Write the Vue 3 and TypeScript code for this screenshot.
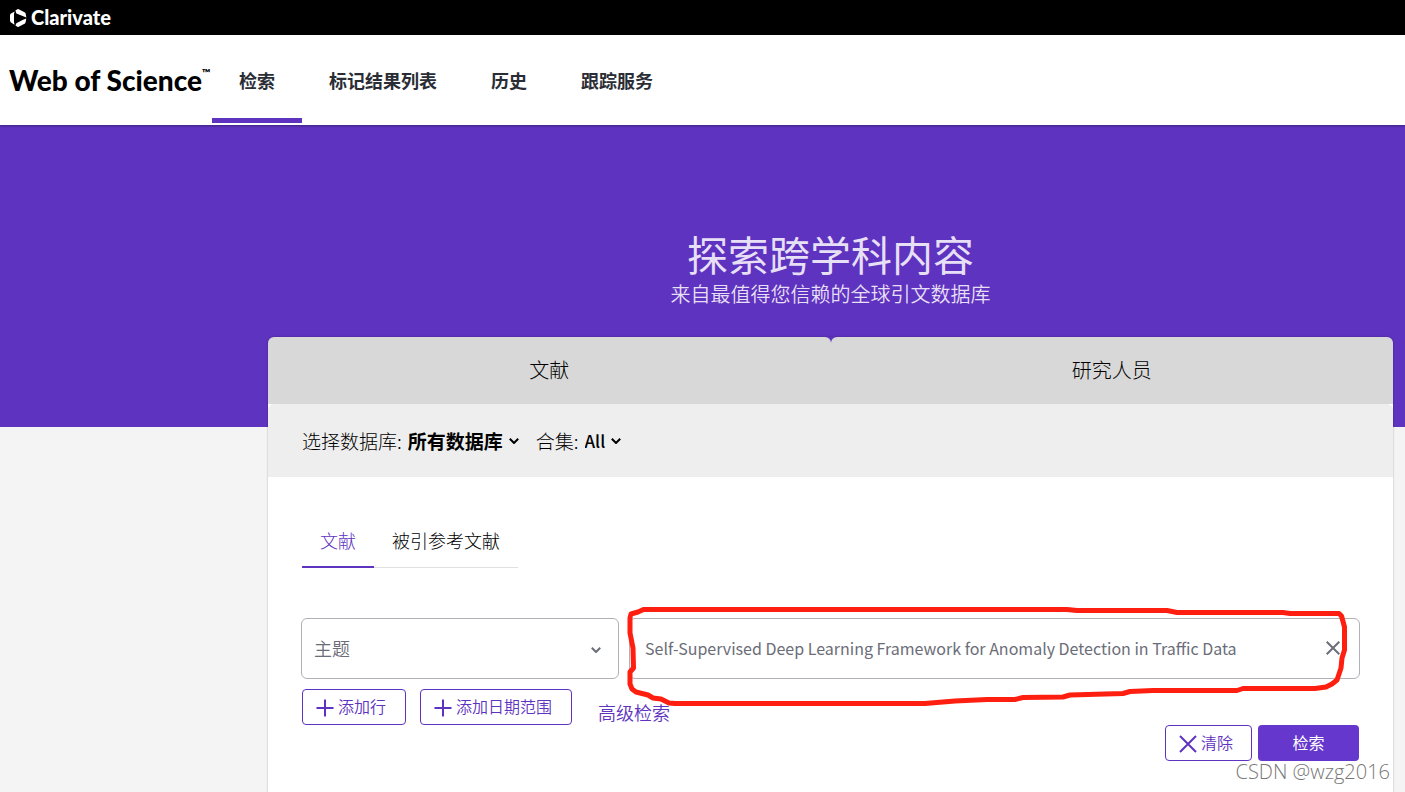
<script setup lang="ts">
import { ref } from 'vue'

const navItems = ['检索', '标记结果列表', '历史', '跟踪服务']
const activeNav = ref(0)

const scopes = ['文献', '研究人员']
const modes = ['文献', '被引参考文献']
const activeMode = ref(0)

const database = ref('所有数据库')
const collection = ref('All')
const field = ref('主题')
const query = ref('Self-Supervised Deep Learning Framework for Anomaly Detection in Traffic Data')

function clearQuery() {
  query.value = ''
}
</script>

<template>
  <div class="page">
    <header>
      <div class="brand-bar">
        <svg class="brand-mark" viewBox="0 0 17 18" aria-hidden="true">
          <path d="M4.6 2.400 1 4.500Q0 5.200 0 6.400V11.600Q0 12.800 1 13.500L4.600 15.800 4 13V5Z" />
          <path d="M5.400 1.500 7.400 0.300Q8.300 -0.100 9.200 0.400L15 3.600Q15.800 4.200 16.300 8.400L6.400 4.600Z" />
          <path d="M16.300 9.600Q15.800 13.800 15 14.400L9.200 17.600Q8.300 18.100 7.400 17.700L5.400 16.500 6.400 14.200 13 10.800Z" />
        </svg>
        <span class="brand-name">Clarivate</span>
      </div>
      <nav class="nav" aria-label="主导航">
        <a class="product" href="#">Web of Science<sup>™</sup></a>
        <a
          v-for="(item, i) in navItems"
          :key="item"
          href="#"
          class="nav-link"
          :class="{ active: activeNav === i }"
          @click.prevent="activeNav = i"
        >{{ item }}</a>
      </nav>
    </header>

    <main>
      <section class="hero">
        <h1>探索跨学科内容</h1>
        <p>来自最值得您信赖的全球引文数据库</p>
      </section>

      <section class="card">
        <div class="scope-tabs">
          <button v-for="scope in scopes" :key="scope" type="button">{{ scope }}</button>
        </div>

        <div class="database-bar">
          <label for="database">选择数据库:</label>
          <span class="inline-select">
            <select id="database" v-model="database">
              <option>所有数据库</option>
            </select>
            <svg viewBox="0 0 10 6" aria-hidden="true"><path d="M0.8 0.8 5 5 9.2 0.8" /></svg>
          </span>
          <label for="collection" class="second">合集:</label>
          <span class="inline-select">
            <select id="collection" v-model="collection">
              <option>All</option>
            </select>
            <svg viewBox="0 0 10 6" aria-hidden="true"><path d="M0.8 0.8 5 5 9.2 0.8" /></svg>
          </span>
        </div>

        <form class="search" @submit.prevent>
          <div class="mode-tabs">
            <button
              v-for="(mode, i) in modes"
              :key="mode"
              type="button"
              :class="{ active: activeMode === i }"
              @click="activeMode = i"
            >{{ mode }}</button>
          </div>

          <div class="fields">
            <div class="field-select">
              <select v-model="field" aria-label="检索字段">
                <option>主题</option>
              </select>
              <svg viewBox="0 0 10 6" aria-hidden="true"><path d="M0.8 0.8 5 5 9.2 0.8" /></svg>
            </div>
            <div class="field-query">
              <input v-model="query" type="text" aria-label="检索内容" />
              <button type="button" aria-label="清空输入" @click="clearQuery">
                <svg viewBox="0 0 14 14" aria-hidden="true"><path d="M0.7 0.7 13.3 13.3M13.3 0.7 0.7 13.3" /></svg>
              </button>
              <svg class="marker" viewBox="0 0 731 61" preserveAspectRatio="none" aria-hidden="true">
                <path
                  d="M391 -8.500H14.500L9 -6 2 -4 1 0V15L4 30 4.500 50 1 54V66L3 71 7 74 19 77 24 80 32 81 40 85 46 85.500H296L326 83 358 81.500 386 81.500 394 79.500 434 79 441 77 494 75.500 501 73.500 524 72.500H608L614 70.500H686L697 69 703 66 708 62 712 50 713 40 715.500 32V9L712.500 -2 710 -4.500H661L654 -5.500H548L538 -7.500H448L438 -8.500Z"
                />
              </svg>
            </div>
          </div>

          <div class="extras">
            <button type="button" class="outline">
              <svg viewBox="0 0 18 18" aria-hidden="true"><path d="M9 0.500V17.500M0.500 9H17.500" /></svg>
              <span>添加行</span>
            </button>
            <button type="button" class="outline">
              <svg viewBox="0 0 18 18" aria-hidden="true"><path d="M9 0.500V17.500M0.500 9H17.500" /></svg>
              <span>添加日期范围</span>
            </button>
            <a href="#">高级检索</a>
          </div>

          <div class="actions">
            <button type="button" class="outline" @click="clearQuery">
              <svg viewBox="0 0 18 18" aria-hidden="true"><path d="M1 1 17 17M17 1 1 17" /></svg>
              <span>清除</span>
            </button>
            <button type="submit" class="primary">检索</button>
          </div>
        </form>
      </section>
    </main>

    <div class="watermark">CSDN @wzg2016</div>
  </div>
</template>

<style>
body {
  margin: 0;
  background: #f4f4f4;
}
</style>

<style scoped>
.page {
  --purple: #5e33bf;
  position: relative;
  display: flex;
  flex-direction: column;
  min-height: 100vh;
  overflow: hidden;
  font-family: "Noto Sans CJK SC", sans-serif;
  font-weight: 350;
  color: #000;
}
.page *,
.page {
  box-sizing: border-box;
}
button,
select,
input {
  font: inherit;
  color: inherit;
  margin: 0;
  padding: 0;
  border: 0;
  background: none;
}
button {
  cursor: pointer;
}
select {
  appearance: none;
}
a {
  color: inherit;
  text-decoration: none;
}
svg {
  fill: none;
  stroke: currentColor;
  flex: none;
}

.brand-bar {
  display: flex;
  align-items: center;
  gap: 4px;
  height: 35px;
  padding-left: 10px;
  background: #000;
  color: #fff;
}
.brand-mark {
  width: 17px;
  height: 18px;
  fill: currentColor;
  stroke: none;
}
.brand-name {
  padding-bottom: 2px;
  font: 900 20px/24px Lato, sans-serif;
}
.nav {
  position: relative;
  z-index: 1;
  display: flex;
  height: 90px;
  background: #fff;
  box-shadow: 0 1px 2px rgba(0, 0, 0, 0.35);
}
.product {
  display: flex;
  align-items: center;
  width: 212px;
  padding-left: 9px;
  font: 900 28px/36px Lato, sans-serif;
  white-space: nowrap;
}
.product sup {
  align-self: flex-start;
  margin-top: 30px;
  font-size: 11px;
  line-height: 16px;
}
.nav-link {
  display: flex;
  align-items: center;
  height: 88px;
  padding: 7px 27px 0;
  border-bottom: 5px solid transparent;
  font-size: 18px;
  font-weight: 700;
  color: #2a2d35;
}
.nav-link.active {
  border-bottom-color: var(--purple);
}

main {
  flex: 1;
  display: flex;
  flex-direction: column;
}
.hero {
  height: 302px;
  padding: 106px 12px 0 268px;
  background: var(--purple);
  color: #e6dff5;
  text-align: center;
  font-family: "Liberation Sans", "Noto Sans CJK SC", sans-serif;
}
.hero h1 {
  margin: 0;
  font-size: 41px;
  font-weight: 400;
  line-height: 52px;
}
.hero p {
  margin: 0;
  font-size: 20px;
  line-height: 24px;
}

.card {
  flex: 1;
  margin: -90px 12px 0 268px;
  border-radius: 6px 6px 0 0;
  background: linear-gradient(transparent 67px, #fff 67px);
  box-shadow: 0 0 2px rgba(0, 0, 0, 0.35);
}
.scope-tabs {
  display: grid;
  grid-template-columns: 1fr 1fr;
}
.scope-tabs button {
  height: 67px;
  padding-bottom: 2px;
  border-radius: 6px 6px 0 0;
  background: #d8d8d8;
  font-size: 20px;
  font-weight: 300;
}
.database-bar {
  display: flex;
  align-items: center;
  height: 73px;
  padding: 0 34px;
  border-radius: 6px 6px 0 0;
  background: #eee;
  font-size: 19px;
  font-weight: 300;
}
.database-bar .second {
  margin-left: 17px;
}
.inline-select {
  display: flex;
  align-items: center;
  gap: 5px;
  margin-left: 6px;
  font-weight: 700;
}
.inline-select svg {
  width: 10px;
  height: 6px;
  stroke-width: 2;
}
#collection {
  font-size: 17px;
  font-weight: 500;
}

.search {
  padding: 38px 34px 31px;
}
.mode-tabs {
  display: flex;
}
.mode-tabs button {
  height: 53px;
  padding: 0 18px 2px;
  border-bottom: 1px solid #e0e0e0;
  font-size: 18px;
  font-weight: 300;
}
.mode-tabs button.active {
  padding-bottom: 1px;
  border-bottom: 2px solid var(--purple);
  color: var(--purple);
}
.fields {
  display: flex;
  gap: 10px;
  margin: 50px -1px 0;
  color: #6b6d78;
}
.field-select {
  position: relative;
  width: 318px;
}
.field-select select {
  width: 100%;
  height: 61px;
  padding: 0 12px 2px;
  border: 1px solid #b0b0b6;
  border-radius: 6px;
  font-size: 18px;
}
.field-select svg {
  position: absolute;
  top: 29px;
  right: 18px;
  width: 10px;
  height: 6px;
  stroke-width: 2;
  pointer-events: none;
}
.field-query {
  position: relative;
  flex: 1;
}
.field-query input {
  width: 100%;
  height: 61px;
  padding: 0 48px 2px 15px;
  border: 1px solid #b0b0b6;
  border-radius: 6px;
  font-size: 16px;
  font-weight: 400;
}
.field-query button {
  position: absolute;
  top: 16px;
  right: 13px;
  display: grid;
  place-items: center;
  width: 28px;
  height: 28px;
}
.field-query button svg {
  width: 14px;
  height: 14px;
  stroke-width: 2;
}
.field-query .marker {
  position: absolute;
  inset: 0;
  width: 100%;
  height: 100%;
  overflow: visible;
  stroke: #ff1f10;
  stroke-width: 5;
  stroke-linejoin: round;
  pointer-events: none;
}

.extras {
  display: flex;
  align-items: center;
  gap: 14px;
  margin-top: 10px;
  color: var(--purple);
}
.extras a {
  margin-left: 12px;
  padding-top: 10px;
  font-size: 18px;
  line-height: 24px;
}
.outline {
  display: flex;
  align-items: center;
  gap: 4px;
  height: 36px;
  padding: 0 18px 2px 13px;
  border: 1px solid var(--purple);
  border-radius: 4px;
  color: var(--purple);
  font-size: 16px;
  line-height: 24px;
}
.extras .outline {
  padding-right: 19px;
}
.outline svg {
  width: 18px;
  height: 18px;
  margin-top: 4px;
  stroke-width: 2;
}
.actions {
  display: flex;
  justify-content: flex-end;
  gap: 6px;
}
.primary {
  width: 101px;
  height: 36px;
  padding-bottom: 2px;
  border-radius: 4px;
  background: #6637cc;
  color: #fff;
  font-size: 16px;
  font-weight: 400;
}

.watermark {
  position: absolute;
  right: 15px;
  bottom: 8px;
  font: 300 20px/24px "Open Sans", sans-serif;
  color: #777;
}
</style>
